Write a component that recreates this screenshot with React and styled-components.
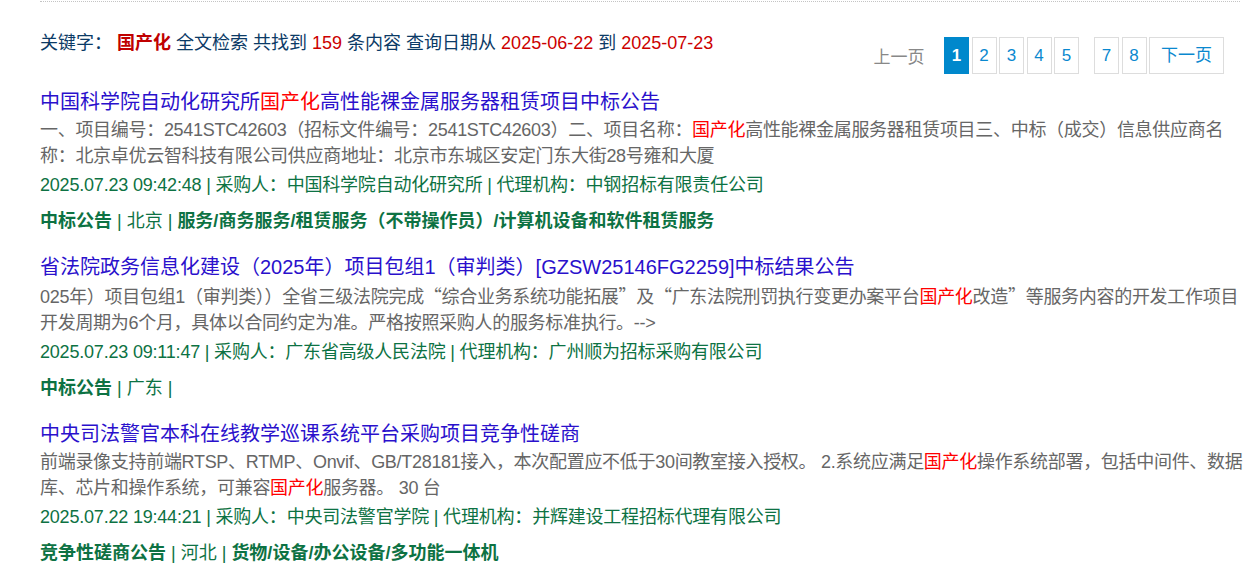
import React from "react";
import styled, { createGlobalStyle } from "styled-components";

const KEYWORD = "国产化";

const items = [
  {
    title: "中国科学院自动化研究所国产化高性能裸金属服务器租赁项目中标公告",
    desc: [
      "一、项目编号：2541STC42603（招标文件编号：2541STC42603）二、项目名称：国产化高性能裸金属服务器租赁项目三、中标（成交）信息供应商名",
      "称：北京卓优云智科技有限公司供应商地址：北京市东城区安定门东大街28号雍和大厦",
    ],
    time: "2025.07.23 09:42:48",
    buyer: "中国科学院自动化研究所",
    agent: "中钢招标有限责任公司",
    tags: [
      { text: "中标公告", bold: true },
      { text: "北京" },
      { text: "服务/商务服务/租赁服务（不带操作员）/计算机设备和软件租赁服务", bold: true },
    ],
  },
  {
    title: "省法院政务信息化建设（2025年）项目包组1（审判类）[GZSW25146FG2259]中标结果公告",
    desc: [
      "025年）项目包组1（审判类））全省三级法院完成“综合业务系统功能拓展”及“广东法院刑罚执行变更办案平台国产化改造”等服务内容的开发工作项目",
      "开发周期为6个月，具体以合同约定为准。严格按照采购人的服务标准执行。-->",
    ],
    time: "2025.07.23 09:11:47",
    buyer: "广东省高级人民法院",
    agent: "广州顺为招标采购有限公司",
    tags: [{ text: "中标公告", bold: true }, { text: "广东" }, { text: "" }],
  },
  {
    title: "中央司法警官本科在线教学巡课系统平台采购项目竞争性磋商",
    desc: [
      "前端录像支持前端RTSP、RTMP、Onvif、GB/T28181接入，本次配置应不低于30间教室接入授权。 2.系统应满足国产化操作系统部署，包括中间件、数据",
      "库、芯片和操作系统，可兼容国产化服务器。 30 台",
    ],
    time: "2025.07.22 19:44:21",
    buyer: "中央司法警官学院",
    agent: "并辉建设工程招标代理有限公司",
    tags: [
      { text: "竞争性磋商公告", bold: true },
      { text: "河北" },
      { text: "货物/设备/办公设备/多功能一体机", bold: true },
    ],
  },
];

const pages = [
  { label: "1", active: true },
  { label: "2" },
  { label: "3" },
  { label: "4" },
  { label: "5" },
  { label: "7", spaced: true },
  { label: "8" },
  { label: "下一页", wide: true },
];

// keyword in red, chinese quotes kept full width
const renderText = (text) =>
  text.split(/(国产化|[“”])/).map((part, i) => {
    if (part === KEYWORD) return <Hl key={i}>{part}</Hl>;
    if (part === "“" || part === "”") return <Quote key={i}>{part}</Quote>;
    return <React.Fragment key={i}>{part}</React.Fragment>;
  });

const App = () => {
  return (
    <>
      <GlobalStyle />
      <Wrapper>
        <Header>
          <Summary>
            关键字： <Key>{KEYWORD}</Key> 全文检索 共找到 <Num>159</Num> 条内容 查询日期从{" "}
            <Num>2025-06-22</Num> 到 <Num>2025-07-23</Num>
          </Summary>
          <Pager>
            <Prev>上一页</Prev>
            {pages.map((p) => (
              <PageBtn key={p.label} $active={p.active} $wide={p.wide} $spaced={p.spaced}>
                {p.label}
              </PageBtn>
            ))}
          </Pager>
        </Header>
        <List>
          {items.map((item, index) => (
            <Item key={`item#${index}`}>
              <Title>{renderText(item.title)}</Title>
              <Desc>
                {item.desc.map((line, i) => (
                  <DescLine key={i}>{renderText(line)}</DescLine>
                ))}
              </Desc>
              <Meta>
                {item.time} | 采购人：{item.buyer} | 代理机构：{item.agent}
              </Meta>
              <Tags>
                {item.tags.map((tag, i) => (
                  <React.Fragment key={i}>
                    {i > 0 && " | "}
                    {tag.bold ? <b>{tag.text}</b> : tag.text}
                  </React.Fragment>
                ))}
              </Tags>
            </Item>
          ))}
        </List>
      </Wrapper>
    </>
  );
};

export default App;

const GlobalStyle = createGlobalStyle`
  body {
    margin: 0;
    background: #ffffff;
    font-family: "Liberation Sans", "Noto Sans CJK SC", sans-serif;
  }
`;

const Wrapper = styled.div`
  width: 1200px;
  margin: 1px 0 0 40px;
  border-top: 1px dotted #c4c4c4;
`;

const Header = styled.div`
  display: flex;
  justify-content: space-between;
  align-items: flex-start;
  height: 85px;
  box-sizing: border-box;
  padding-top: 26px;
`;

const Summary = styled.div`
  font-size: 18px;
  line-height: 30px;
  color: #0b3a66;
`;

const Key = styled.b`
  color: #c00000;
`;

const Num = styled.span`
  color: #cc0000;
`;

const Pager = styled.div`
  display: flex;
  align-items: center;
  gap: 2.5px;
  margin: 9px 16px 0 0;
  font-size: 17px;
`;

const Prev = styled.span`
  color: #888888;
  margin-right: 17px;
`;

const PageBtn = styled.span`
  box-sizing: border-box;
  height: 37px;
  line-height: 35px;
  min-width: 25px;
  padding: ${(p) => (p.$wide ? "0 11px" : "0")};
  margin-left: ${(p) => (p.$spaced ? "12.5px" : "0")};
  text-align: center;
  border: 1px solid ${(p) => (p.$active ? "#0088cc" : "#dddddd")};
  background: ${(p) => (p.$active ? "#0088cc" : "#ffffff")};
  color: ${(p) => (p.$active ? "#ffffff" : "#0a88cf")};
  font-weight: ${(p) => (p.$active ? "bold" : "normal")};
`;

const List = styled.div`
  display: flex;
  flex-direction: column;
`;

const Item = styled.div`
  margin-bottom: 15px;
`;

const Title = styled.div`
  font-size: 20px;
  line-height: 30px;
  color: #2a10cc;
`;

const Hl = styled.span`
  color: #ff0000;
`;

const Quote = styled.span`
  font-family: "Noto Sans CJK SC", sans-serif;
`;

const Desc = styled.div`
  font-size: 18px;
  line-height: 26px;
  letter-spacing: -0.3px;
  color: #666666;
`;

const DescLine = styled.div`
  white-space: nowrap;
`;

const Meta = styled.div`
  font-size: 18px;
  line-height: 32px;
  letter-spacing: -0.2px;
  color: #0d7243;
`;

const Tags = styled.div`
  margin-top: 4px;
  font-size: 18px;
  line-height: 32px;
  color: #0d7243;
  b {
    font-weight: bold;
  }
`;
